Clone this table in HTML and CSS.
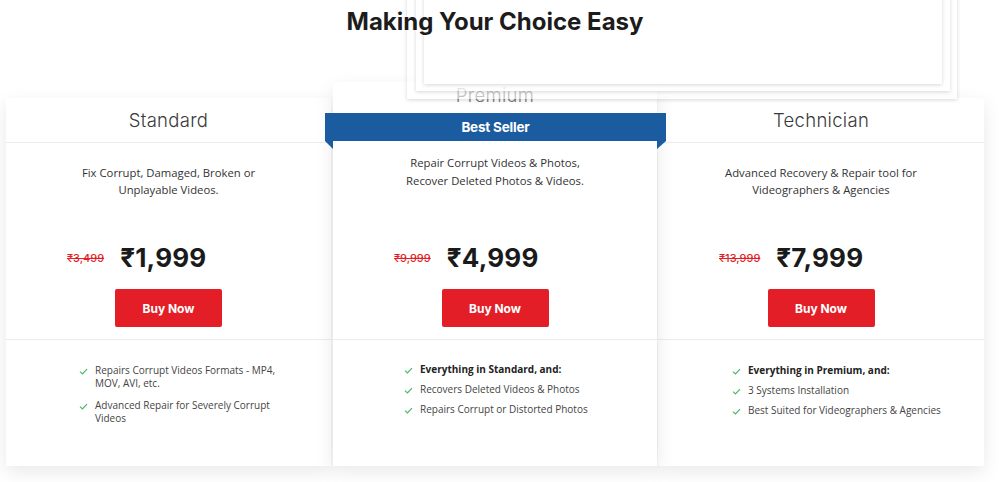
FILE: index.html
```html
<!DOCTYPE html>
<html lang="en">
<head>
<meta charset="utf-8">
<title>Making Your Choice Easy</title>
<link rel="stylesheet" href="styles.css">
</head>
<body>
<div class="page">
  <div class="paper-stack" aria-hidden="true">
    <div class="sheet sheet-back"></div>
    <div class="sheet sheet-mid"></div>
    <div class="sheet sheet-front"></div>
  </div>
  <h1 class="title">Making Your Choice Easy</h1>
  <div class="plans">
    <div class="card card-standard">
      <div class="card-head">Standard</div>
      <div class="card-desc">Fix Corrupt, Damaged, Broken or<br>Unplayable Videos.</div>
      <div class="price-row"><span class="old-price">₹3,499</span><span class="new-price">₹1,999</span></div>
      <div class="buy-wrap"><a class="buy-btn" href="#">Buy Now</a></div>
      <ul class="features">
        <li><svg class="check" viewBox="0 0 10 8"><path d="M1 4.2 L3.8 6.8 L9 1.2"/></svg><span>Repairs Corrupt Videos Formats - MP4,<br>MOV, AVI, etc.</span></li>
        <li class="gap-lg"><svg class="check" viewBox="0 0 10 8"><path d="M1 4.2 L3.8 6.8 L9 1.2"/></svg><span>Advanced Repair for Severely Corrupt<br>Videos</span></li>
      </ul>
    </div>
    <div class="card card-premium">
      <div class="card-head card-head-premium">Premium</div>
      <div class="ribbon">Best Seller</div>
      <div class="card-desc card-desc-premium">Repair Corrupt Videos &amp; Photos,<br>Recover Deleted Photos &amp; Videos.</div>
      <div class="price-row"><span class="old-price">₹9,999</span><span class="new-price">₹4,999</span></div>
      <div class="buy-wrap"><a class="buy-btn" href="#">Buy Now</a></div>
      <ul class="features">
        <li><svg class="check" viewBox="0 0 10 8"><path d="M1 4.2 L3.8 6.8 L9 1.2"/></svg><span class="strong">Everything in Standard, and:</span></li>
        <li><svg class="check" viewBox="0 0 10 8"><path d="M1 4.2 L3.8 6.8 L9 1.2"/></svg><span>Recovers Deleted Videos &amp; Photos</span></li>
        <li><svg class="check" viewBox="0 0 10 8"><path d="M1 4.2 L3.8 6.8 L9 1.2"/></svg><span>Repairs Corrupt or Distorted Photos</span></li>
      </ul>
    </div>
    <div class="card card-tech">
      <div class="card-head">Technician</div>
      <div class="card-desc">Advanced Recovery &amp; Repair tool for<br>Videographers &amp; Agencies</div>
      <div class="price-row"><span class="old-price">₹13,999</span><span class="new-price">₹7,999</span></div>
      <div class="buy-wrap"><a class="buy-btn" href="#">Buy Now</a></div>
      <ul class="features">
        <li><svg class="check" viewBox="0 0 10 8"><path d="M1 4.2 L3.8 6.8 L9 1.2"/></svg><span class="strong">Everything in Premium, and:</span></li>
        <li><svg class="check" viewBox="0 0 10 8"><path d="M1 4.2 L3.8 6.8 L9 1.2"/></svg><span>3 Systems Installation</span></li>
        <li><svg class="check" viewBox="0 0 10 8"><path d="M1 4.2 L3.8 6.8 L9 1.2"/></svg><span>Best Suited for Videographers &amp; Agencies</span></li>
      </ul>
    </div>
  </div>
</div>
</body>
</html>
```
FILE: styles.css
```css
* { box-sizing: border-box; }
html, body { margin: 0; padding: 0; background: #ffffff; }
body {
  width: 1000px;
  height: 482px;
  overflow: hidden;
  font-family: "Open Sans", "Noto Sans", sans-serif;
  color: #333;
}
.page {
  position: relative;
  padding-top: 8px;
}
.title {
  position: relative;
  z-index: 3;
  margin: 0;
  text-align: center;
  font-family: Inter, "Noto Sans", sans-serif;
  font-weight: 700;
  font-size: 24px;
  line-height: 28px;
  color: #1c1c1c;
  padding-right: 10px;
}
/* decorative stacked sheets overlay */
.paper-stack {
  position: absolute;
  left: 0;
  top: 0;
  width: 1000px;
  height: 100px;
  z-index: 2;
  pointer-events: none;
}
.sheet {
  position: absolute;
  top: -20px;
  background: rgba(255, 255, 255, 0.55);
  box-shadow: 0 1px 4px rgba(0, 0, 0, 0.16);
}
.sheet-back { left: 407px; width: 550px; height: 119px; }
.sheet-mid { left: 416px; width: 534px; height: 111px; }
.sheet-front { left: 424px; width: 518px; height: 104px; background: rgba(255,255,255,0.7); }

.plans {
  display: flex;
  align-items: flex-end;
  margin-top: 46px;
  padding-left: 6px;
}
.card {
  position: relative;
  display: flex;
  flex-direction: column;
  background: #fff;
  box-shadow: 0 6px 18px rgba(0, 0, 0, 0.09);
}
.card-standard { width: 325px; height: 368px; }
.card-premium { width: 324px; height: 384px; margin: 0 1px 0 2px; z-index: 1; }
.card-tech { width: 326px; height: 368px; }

.card-head {
  height: 45px;
  border-bottom: 1px solid #ececec;
  display: flex;
  align-items: center;
  justify-content: center;
  font-family: Inter, "Noto Sans", sans-serif;
  font-weight: 300;
  font-size: 18.5px;
  color: #3a3a3a;
  letter-spacing: 0.3px;
}
.card-head-premium {
  height: 31px;
  border-bottom: 0;
  align-items: flex-end;
  padding-bottom: 7px;
  color: #7a7a7a;
}
.ribbon {
  position: relative;
  margin: 0 -9px 0 -8px;
  height: 28px;
  background: #1a5c9f;
  color: #fff;
  font-family: Inter, "Noto Sans", sans-serif;
  font-weight: 700;
  font-size: 13.5px;
  display: flex;
  align-items: center;
  justify-content: center;
  letter-spacing: -0.2px;
}
.ribbon::before,
.ribbon::after {
  content: "";
  position: absolute;
  top: 100%;
  width: 0;
  height: 0;
  border-top: 8px solid #1a5c9f;
}
.ribbon::before { left: 0; border-left: 8px solid transparent; }
.ribbon::after { right: 0; border-right: 9px solid transparent; }

.card-desc {
  flex: 1;
  text-align: center;
  font-size: 11.3px;
  line-height: 17px;
  color: #333;
  padding-top: 21px;
}
.card-desc-premium { padding-top: 13px; line-height: 18px; }

.price-row {
  height: 34px;
  display: flex;
  align-items: center;
  padding-left: 61px;
  gap: 16px;
}
.old-price {
  font-family: Inter, "Noto Sans", sans-serif;
  font-size: 11px;
  font-weight: 500;
  color: #e31e26;
  text-decoration: line-through;
  margin-top: 1px;
}
.new-price {
  font-family: Inter, "Noto Sans", sans-serif;
  font-size: 26px;
  font-weight: 700;
  color: #1a1a1a;
  letter-spacing: 0.2px;
}
.buy-wrap {
  display: flex;
  justify-content: center;
  padding: 15px 0 12px;
  border-bottom: 1px solid #ececec;
}
.buy-btn {
  width: 107px;
  height: 38px;
  display: flex;
  align-items: center;
  justify-content: center;
  background: #e31e26;
  border-radius: 2px;
  color: #fff;
  text-decoration: none;
  font-family: Inter, "Noto Sans", sans-serif;
  font-weight: 700;
  font-size: 12px;
}
.features {
  height: 126px;
  list-style: none;
  margin: 0;
  padding: 24px 20px 0 73px;
  font-size: 10px;
  line-height: 13px;
  color: #444;
}
.card-premium .features { padding-left: 71px; padding-top: 23px; }
.card-tech .features { padding-left: 74px; }
.features li {
  display: flex;
  align-items: flex-start;
  margin-bottom: 7px;
}
.features li.gap-lg { margin-top: 9px; }
.check {
  flex: none;
  width: 9px;
  height: 7px;
  margin: 4px 7px 0 0;
  fill: none;
  stroke: #4cb86b;
  stroke-width: 1.4;
}
.strong { font-weight: 700; color: #222; }
```
